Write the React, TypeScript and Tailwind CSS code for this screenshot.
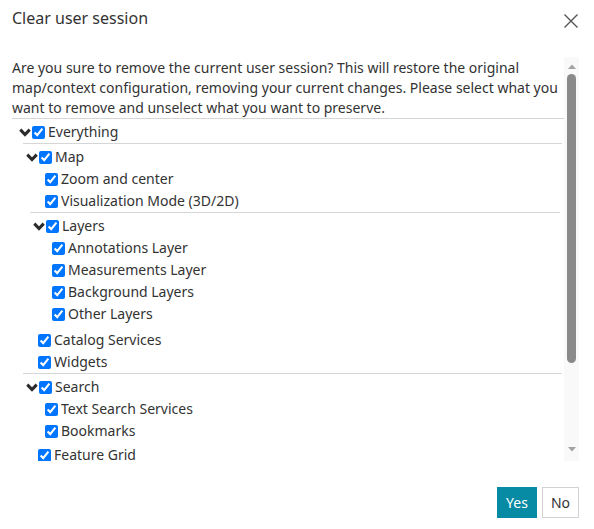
import React from 'react';

type Node = { label: string; children?: Node[] };

const tree: Node = {
  label: 'Everything',
  children: [
    {
      label: 'Map',
      children: [
        { label: 'Zoom and center' },
        { label: 'Visualization Mode (3D/2D)' },
        {
          label: 'Layers',
          children: [
            { label: 'Annotations Layer' },
            { label: 'Measurements Layer' },
            { label: 'Background Layers' },
            { label: 'Other Layers' },
          ],
        },
      ],
    },
    { label: 'Catalog Services' },
    { label: 'Widgets' },
    {
      label: 'Search',
      children: [{ label: 'Text Search Services' }, { label: 'Bookmarks' }],
    },
    { label: 'Feature Grid' },
    { label: 'Timeline' },
    { label: 'Map Templates' },
    { label: 'User Extensions' },
    { label: 'Other Settings' },
  ],
};

const Chevron = () => (
  <svg width="12" height="9" viewBox="0 0 12 9" className="mr-[1px] shrink-0">
    <polyline points="1.3,1.6 6,6.6 10.7,1.6" fill="none" stroke="#2b2b2b" strokeWidth="3" />
  </svg>
);

const Check = () => (
  <input
    type="checkbox"
    defaultChecked
    className="m-0 mr-[3px] h-[13px] w-[13px] shrink-0 accent-[#0075ff]"
  />
);

function TreeNode({ node, root }: { node: Node; root?: boolean }) {
  if (!node.children) {
    return (
      <div className="flex h-[22px] items-center pl-[15px]">
        <Check />
        <span>{node.label}</span>
      </div>
    );
  }
  return (
    <div className={root ? 'pb-[2px]' : 'border-t border-[#d6d6d6] pb-[2px]'}>
      <div className="flex h-[24px] items-center pl-[3px] pt-[2px]">
        <Chevron />
        <Check />
        <span>{node.label}</span>
      </div>
      <div className="pl-[7px] pr-[2px]">
        {node.children.map((c) => (
          <TreeNode key={c.label} node={c} />
        ))}
      </div>
    </div>
  );
}

// drawn scrollbar, the page screenshot hides native ones
const ScrollBar = () => (
  <div className="flex w-[15px] shrink-0 flex-col items-center bg-[#f9f9f9] pb-[9px] pt-[7px]">
    <svg width="8" height="5" viewBox="0 0 8 5">
      <polygon points="0,5 4,0.5 8,5" fill="#a3a3a3" />
    </svg>
    <div className="mt-[5px] h-[289px] w-[9px] rounded-full bg-[#8a8a8a]" />
    <div className="flex-1" />
    <svg width="8" height="5" viewBox="0 0 8 5">
      <polygon points="0,0 8,0 4,4.5" fill="#a3a3a3" />
    </svg>
  </div>
);

export default function App() {
  return (
    <div
      className="flex h-[529px] w-[594px] flex-col bg-white text-[#333]"
      style={{ fontFamily: '"Noto Sans", sans-serif' }}
    >
      {/* Header */}
      <div className="flex h-[57px] items-start justify-between pl-3 pr-[15px] pt-[6px]">
        <h3 className="text-[16px] leading-6">Clear user session</h3>
        <button className="mt-[7px] text-[#555]" title="Close">
          <svg width="16" height="16" viewBox="0 0 16 16">
            <path d="M1.5 1.5 L14.5 14.5 M14.5 1.5 L1.5 14.5" stroke="#555" strokeWidth="1.4" />
          </svg>
        </button>
      </div>

      {/* Body */}
      <div className="ml-3 mr-[15px] flex h-[404px]">
        <div className="flex-1 overflow-hidden text-[14px] leading-5">
          <p className="border-b border-[#d6d6d6] pt-[1px]">
            Are you sure to remove the current user session? This will restore the original
            map/context configuration, removing your current changes. Please select what you want
            to remove and unselect what you want to preserve.
          </p>
          <div className="pl-1">
            <TreeNode node={tree} root />
          </div>
        </div>
        <ScrollBar />
      </div>

      {/* Footer */}
      <div className="flex flex-1 items-start justify-end gap-[5px] pr-[15px] pt-[26px] text-[14px]">
        <button className="h-[31px] bg-[#078aa3] px-[9px] text-white">Yes</button>
        <button className="h-[31px] border border-[#d2d2d2] bg-white px-[8px] text-[#333]">No</button>
      </div>
    </div>
  );
}
